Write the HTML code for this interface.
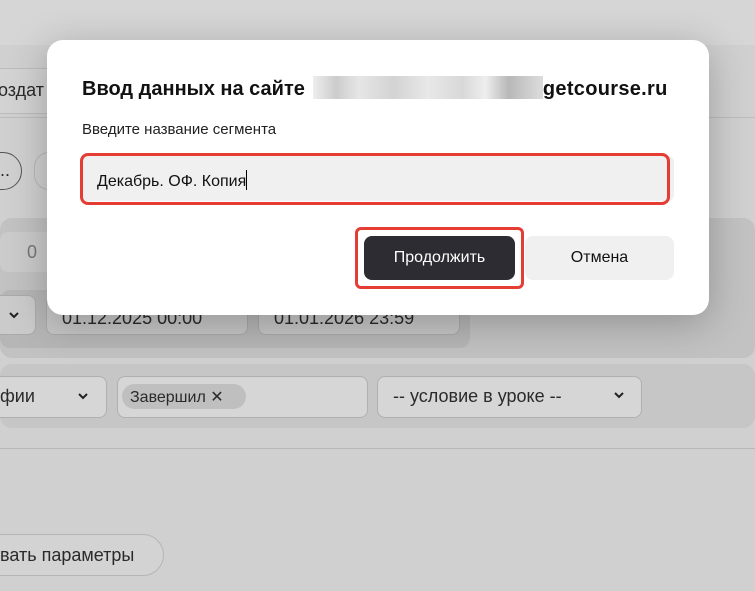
<!DOCTYPE html>
<html><head><meta charset="utf-8"><style>
*{box-sizing:border-box;margin:0;padding:0}
body{width:755px;height:591px;overflow:hidden;background:#d0d0d0;font-family:"Liberation Sans",sans-serif;position:relative;color:#111}
.a{position:absolute}
.bg-t{font-size:18px;color:#2a2a2a}
.ch{position:absolute;width:12px;height:8px}
</style></head><body>
<div class="a" style="left:0;top:0;width:755px;height:45px;background:#d6d6d6"></div>
<div class="a" style="left:-10px;top:68px;width:70px;height:46px;border:1px solid #bdbdbd;border-radius:8px;background:#d3d3d3"></div>
<div class="a bg-t" style="left:-2px;top:80px">оздат</div>
<div class="a" style="left:0;top:117px;width:755px;height:1px;background:#bdbdbd"></div>
<div class="a" style="left:-20px;top:152px;width:42px;height:38px;border:1px solid #555;border-radius:19px"></div>
<div class="a bg-t" style="left:0;top:160px">..</div>
<div class="a" style="left:34px;top:152px;width:30px;height:38px;border:1px solid #b8b8b8;border-radius:19px"></div>
<div class="a" style="left:0;top:218px;width:755px;height:140px;background:#c2c2c2;border-radius:12px"></div>
<div class="a" style="left:0;top:232px;width:60px;height:40px;background:#cbcbcb;border-radius:8px"></div>
<div class="a bg-t" style="left:27px;top:242px;color:#777">0</div>
<div class="a" style="left:0;top:290px;width:470px;height:58px;background:#b6b6b6;border-radius:10px"></div>
<div class="a" style="left:-10px;top:295px;width:46px;height:40px;background:#cbcbcb;border:1px solid #aaa;border-radius:8px"></div>
<svg class="ch" style="left:8px;top:311px" viewBox="0 0 12 8"><path d="M2 2l4 4 4-4" fill="none" stroke="#222" stroke-width="2"/></svg>
<div class="a" style="left:46px;top:295px;width:202px;height:40px;background:#c6c6c6;border:1px solid #aaa;border-radius:8px"></div>
<div class="a bg-t" style="left:62px;top:308px">01.12.2025 00:00</div>
<div class="a" style="left:258px;top:295px;width:202px;height:40px;background:#c6c6c6;border:1px solid #aaa;border-radius:8px"></div>
<div class="a bg-t" style="left:274px;top:308px">01.01.2026 23:59</div>
<div class="a" style="left:0;top:364px;width:755px;height:64px;background:#c6c6c6;border-radius:12px"></div>
<div class="a" style="left:-10px;top:376px;width:117px;height:42px;background:#d6d6d6;border:1px solid #b0b0b0;border-radius:8px"></div>
<div class="a bg-t" style="left:0;top:386px">фии</div>
<svg class="ch" style="left:77px;top:392px" viewBox="0 0 12 8"><path d="M2 2l4 4 4-4" fill="none" stroke="#222" stroke-width="2"/></svg>
<div class="a" style="left:117px;top:376px;width:251px;height:42px;background:#d6d6d6;border:1px solid #b0b0b0;border-radius:8px"></div>
<div class="a" style="left:122px;top:384px;width:124px;height:25px;background:#bfbfbf;border-radius:13px"></div>
<div class="a" style="left:130px;top:387px;font-size:16px;color:#2a2a2a">Завершил ✕</div>
<div class="a" style="left:377px;top:376px;width:265px;height:42px;background:#d6d6d6;border:1px solid #b0b0b0;border-radius:8px"></div>
<div class="a bg-t" style="left:393px;top:386px">-- условие в уроке --</div>
<svg class="ch" style="left:613px;top:391px" viewBox="0 0 12 8"><path d="M2 2l4 4 4-4" fill="none" stroke="#222" stroke-width="2"/></svg>
<div class="a" style="left:0;top:448px;width:755px;height:1px;background:#b8b8b8"></div>
<div class="a" style="left:-20px;top:534px;width:184px;height:42px;border:1px solid #b5b5b5;border-radius:21px;background:#d3d3d3"></div>
<div class="a bg-t" style="left:0;top:545px">вать параметры</div>
<div class="a" style="left:47px;top:40px;width:662px;height:275px;background:#fff;border-radius:16px;box-shadow:0 8px 40px rgba(0,0,0,.25)"></div>
<div class="a" style="left:82px;top:76px;font-size:20px;font-weight:bold;color:#111;white-space:nowrap">Ввод данных на сайте<span style="display:inline-block;width:230px;height:23px;vertical-align:-4px;margin-left:8px;background:linear-gradient(90deg,#eee,#ccc 10%,#e6e6e6 20%,#d3d3d3 35%,#e8e8e8 50%,#d8d8d8 65%,#eee 75%,#b8b8b8 85%,#ddd)"></span><span style="letter-spacing:0.3px">getcourse.ru</span></div>
<div class="a" style="left:82px;top:121px;font-size:15px;color:#222">Введите название сегмента</div>
<div class="a" style="left:82px;top:156px;width:592px;height:45px;background:#f0f0f0;border-radius:6px"></div>
<div class="a" style="left:80px;top:153px;width:590px;height:52px;border:3px solid #e53c33;border-radius:8px"></div>
<div class="a" style="left:97px;top:170px;font-size:16px;color:#111">Декабрь. ОФ. Копия<span style="display:inline-block;width:1px;height:20px;background:#000;vertical-align:-4px"></span></div>
<div class="a" style="left:355px;top:227px;width:169px;height:62px;border:3px solid #e53c33;border-radius:6px"></div>
<div class="a" style="left:364px;top:236px;width:151px;height:44px;background:#2d2c32;border-radius:8px;color:#fff;font-size:16px;line-height:44px;text-align:center">Продолжить</div>
<div class="a" style="left:525px;top:236px;width:149px;height:44px;background:#f0f0f0;border-radius:8px;color:#111;font-size:16px;line-height:44px;text-align:center">Отмена</div>
</body></html>
